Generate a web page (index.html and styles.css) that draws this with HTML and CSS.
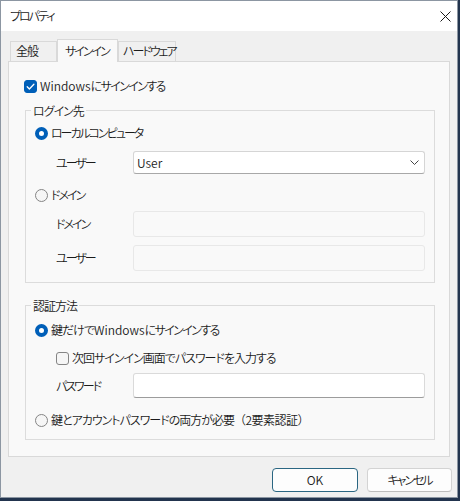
FILE: index.html
```html
<!DOCTYPE html>
<html lang="ja">
<head>
<meta charset="utf-8">
<title>プロパティ</title>
<link rel="stylesheet" href="styles.css">
</head>
<body>
<div class="window">
  <div class="titlebar">
    <span class="title kana">プロパティ</span>
    <span class="close"><svg width="11" height="11" viewBox="0 0 11 11"><path d="M0.5 0.5 L10.5 10.5 M10.5 0.5 L0.5 10.5" stroke="#1a1a1a" stroke-width="1" fill="none"/></svg></span>
  </div>
  <div class="content">
    <div class="tabs">
      <div class="tab tab-general">全般</div>
      <div class="tab tab-signin active"><span class="kana">サインイン</span></div>
      <div class="tab tab-hw"><span class="kana">ハードウェア</span></div>
    </div>
    <div class="panel">
      <div class="check-row signin-row">
        <span class="checkbox checked"><svg width="13" height="13" viewBox="0 0 13 13"><path d="M3.2 6.8 L5.4 9 L9.9 4.3" stroke="#fff" stroke-width="1.3" fill="none" stroke-linecap="round" stroke-linejoin="round"/></svg></span>
        <span class="lbl"><span class="en">Windows</span><span class="tight">にサインインする</span></span>
      </div>
      <fieldset class="group group-login">
        <legend>ログイン先</legend>
        <div class="radio-row r-local"><span class="radio on"></span><span class="lbl kana">ローカルコンピュータ</span></div>
        <div class="field-row f-user">
          <span class="field-label kana">ユーザー</span>
          <div class="select"><span class="select-value en">User</span><svg width="9" height="5" viewBox="0 0 9 5"><path d="M0.5 0.5 L4.5 4.5 L8.5 0.5" stroke="#444" stroke-width="1" fill="none"/></svg></div>
        </div>
        <div class="radio-row r-domain"><span class="radio"></span><span class="lbl kana">ドメイン</span></div>
        <div class="field-row f-domain">
          <span class="field-label kana">ドメイン</span>
          <div class="input disabled"></div>
        </div>
        <div class="field-row f-duser">
          <span class="field-label kana">ユーザー</span>
          <div class="input disabled"></div>
        </div>
      </fieldset>
      <fieldset class="group group-auth">
        <legend>認証方法</legend>
        <div class="radio-row r-key"><span class="radio on"></span><span class="lbl">鍵だけで<span class="en">Windows</span><span class="tight">にサインインする</span></span></div>
        <div class="check-row c-next"><span class="checkbox"></span><span class="lbl">次回サインイン画面でパスワードを入力する</span></div>
        <div class="field-row f-pwd">
          <span class="field-label kana">パスワード</span>
          <div class="input"></div>
        </div>
        <div class="radio-row r-both"><span class="radio"></span><span class="lbl">鍵とアカウントパスワードの両方が必要<span class="paren">（2要素認証）</span></span></div>
      </fieldset>
    </div>
    <div class="footer">
      <button class="btn btn-default"><span class="en">OK</span></button>
      <button class="btn btn-cancel"><span class="kana">キャンセル</span></button>
    </div>
  </div>
</div>
</body>
</html>
```

FILE: styles.css
```css
html, body {
  margin: 0;
  padding: 0;
}
body {
  background: #22344e;
  width: 460px;
  height: 501px;
  overflow: hidden;
  font-family: "Noto Sans CJK JP", "Noto Sans", sans-serif;
  font-size: 12px;
  font-weight: 350;
  font-feature-settings: "palt";
  letter-spacing: -1px;
  color: #1b1b1b;
}
.en {
  letter-spacing: 0;
}
.kana {
  letter-spacing: -2px;
}
.tight {
  letter-spacing: -1.6px;
}
.paren {
  font-feature-settings: normal;
  letter-spacing: -0.5px;
}
.window {
  box-sizing: border-box;
  width: 458px;
  height: 498px;
  border: 1px solid #8c96a2;
  background: #f0f0f0;
  display: flex;
  flex-direction: column;
}
.titlebar {
  height: 30px;
  background: #ffffff;
  display: flex;
  align-items: center;
  justify-content: space-between;
  padding-left: 9px;
  flex: none;
}
.title {
  line-height: 16px;
}
.close {
  width: 24px;
  height: 30px;
  display: flex;
  align-items: center;
  justify-content: center;
}
.content {
  flex: 1;
  padding-top: 8px;
  display: flex;
  flex-direction: column;
}
.tabs {
  display: flex;
  align-items: flex-end;
  margin-left: 9px;
  height: 22px;
}
.tab {
  box-sizing: border-box;
  height: 20px;
  border: 1px solid #d9d9d9;
  border-bottom: none;
  background: #f0f0f0;
  line-height: 18px;
  padding-left: 5px;
  white-space: nowrap;
}
.tab-general { width: 47px; }
.tab-signin { width: 61px; padding-left: 7px; }
.tab-hw { width: 58px; padding-left: 4px; }
.tab.active {
  height: 23px;
  margin-bottom: -1px;
  background: #f9f9f9;
  position: relative;
  z-index: 1;
  line-height: 21px;
}
.panel {
  box-sizing: border-box;
  height: 396px;
  margin: 0 7px;
  border: 1px solid #d9d9d9;
  background: #f9f9f9;
  padding-top: 14px;
}
.check-row, .radio-row {
  display: flex;
  align-items: center;
  height: 20px;
  gap: 3px;
}
.lbl {
  line-height: 16px;
  white-space: nowrap;
}
.signin-row {
  padding-left: 15px;
}
.checkbox {
  box-sizing: border-box;
  width: 13px;
  height: 13px;
  border: 1px solid #858585;
  border-radius: 3px;
  background: #f6f6f6;
  flex: none;
  display: flex;
}
.checkbox.checked {
  border-color: #005fb8;
  background: #005fb8;
}
.checkbox.checked svg {
  margin: -1px;
}
.radio {
  box-sizing: border-box;
  width: 13px;
  height: 13px;
  border: 1px solid #858585;
  border-radius: 50%;
  background: #f6f6f6;
  flex: none;
}
.radio.on {
  border: 4px solid #005fb8;
  background: #ffffff;
}
.group {
  margin: 6px 14px 0 16px;
  padding: 0 9px;
  border: 1px solid #dcdcdc;
  min-width: 0;
}
.group legend {
  margin-left: -4px;
  padding: 0 2px;
  line-height: 17px;
}
.group-login { padding-bottom: 11px; }
.group-auth { margin-top: 14px; padding-bottom: 9px; }
.field-row {
  display: flex;
  align-items: center;
  padding-left: 21px;
}
.field-label {
  width: 77px;
  flex: none;
  line-height: 16px;
}
.select, .input {
  box-sizing: border-box;
  flex: 1;
  height: 100%;
  border-radius: 3px;
}
.select {
  background: #ffffff;
  border: 1px solid #d5d5d5;
  border-bottom-color: #a8a8a8;
  display: flex;
  align-items: center;
  justify-content: space-between;
  padding: 0 5px 0 3px;
}
.select-value {
  line-height: 16px;
}
.input {
  background: #ffffff;
  border: 1px solid #dadada;
  border-bottom-color: #9c9c9c;
}
.input.disabled {
  background: #f9f9f9;
  border: 1px solid #e8e8e8;
}
.r-local { margin-top: 4px; }
.f-user { margin-top: 8px; height: 23px; }
.r-domain { margin-top: 11px; }
.f-domain { margin-top: 6px; height: 26px; }
.f-duser { margin-top: 8px; height: 26px; }
.r-key { margin-top: 6px; }
.c-next { margin-top: 8px; padding-left: 21px; }
.f-pwd { margin-top: 5px; height: 25px; }
.r-both { margin-top: 12px; }
.footer {
  display: flex;
  justify-content: flex-end;
  gap: 9px;
  margin-top: 11px;
  padding-right: 5px;
}
.btn {
  box-sizing: border-box;
  height: 24px;
  border-radius: 4px;
  background: #fdfdfd;
  border: 1px solid #d3d3d3;
  border-bottom-color: #bdbdbd;
  font: inherit;
  letter-spacing: -1px;
  color: #1b1b1b;
  padding: 0;
  line-height: 16px;
}
.btn-default {
  width: 86px;
  border: 1px solid #2a6682;
}
.btn-cancel {
  width: 85px;
}
```
